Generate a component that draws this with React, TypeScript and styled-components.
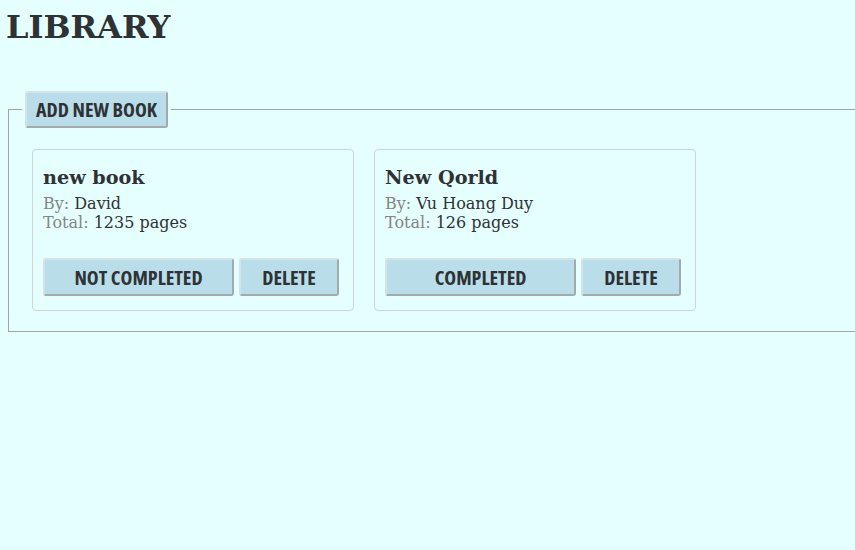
import React from "react";
import styled, { createGlobalStyle } from "styled-components";

const Global = createGlobalStyle`
  html, body { margin: 0; padding: 0; background: #e5fefe; overflow: hidden; }
  body { font-family: "DejaVu Serif", serif; color: #333; }
`;

const Page = styled.div`
  padding: 9px 0 0 6px;
  overflow: hidden;
  height: 541px;
`;

const Title = styled.h1`
  margin: 0 0 45px 0;
  font-size: 32px;
  font-weight: bold;
  color: #2f3234;
  line-height: 37px;
`;

const Shelf = styled.fieldset`
  margin: 0 0 0 2px;
  width: 100vw;
  border: 1px solid #a4a4a4;
  padding: 21px 23px 20px 23px;
  box-sizing: border-box;
`;

const Legend = styled.legend`
  padding: 0 3px;
  margin-left: -10px;
`;

const Button = styled.button<{ $tall?: boolean }>`
  font-family: "Open Sans", sans-serif;
  font-stretch: 75%;
  font-weight: 700;
  font-size: 20px;
  color: #2f3234;
  background: #b9deea;
  border: 2px solid;
  border-color: #d3e3e8 #a2aaac #a2aaac #d3e3e8;
  border-radius: 3px;
  height: ${(p) => (p.$tall ? 38 : 37)}px;
  padding: 0 9px;
  cursor: pointer;
  text-transform: uppercase;
`;

const Cards = styled.div`
  display: flex;
  gap: 20px;
`;

const Card = styled.div`
  width: 322px;
  box-sizing: border-box;
  border: 1px solid #cfd6d6;
  border-radius: 4px;
  padding: 16px 10px 14px 10px;
`;

const BookTitle = styled.h3`
  margin: 0 0 5px 0;
  font-size: 19.2px;
  font-weight: bold;
  color: #2f3234;
`;

const Line = styled.div`
  font-size: 16px;
  color: #2f3234;
`;

const Label = styled.span`
  color: #858585;
`;

const Actions = styled.div`
  display: grid;
  grid-template-columns: 191px 100px;
  gap: 5px;
  margin-top: 26px;
`;

type Book = { title: string; author: string; pages: number; completed: boolean };

const books: Book[] = [
  { title: "new book", author: "David", pages: 1235, completed: false },
  { title: "New Qorld", author: "Vu Hoang Duy", pages: 126, completed: true },
];

export default function App() {
  return (
    <>
      <Global />
      <Page>
        <Title>LIBRARY</Title>
        <Shelf>
          <Legend>
            <Button>Add new book</Button>
          </Legend>
          <Cards>
            {books.map((b) => (
              <Card key={b.title}>
                <BookTitle>{b.title}</BookTitle>
                <Line>
                  <Label>By: </Label>
                  {b.author}
                </Line>
                <Line>
                  <Label>Total: </Label>
                  {b.pages} pages
                </Line>
                <Actions>
                  <Button $tall>{b.completed ? "Completed" : "Not completed"}</Button>
                  <Button $tall>Delete</Button>
                </Actions>
              </Card>
            ))}
          </Cards>
        </Shelf>
      </Page>
    </>
  );
}
